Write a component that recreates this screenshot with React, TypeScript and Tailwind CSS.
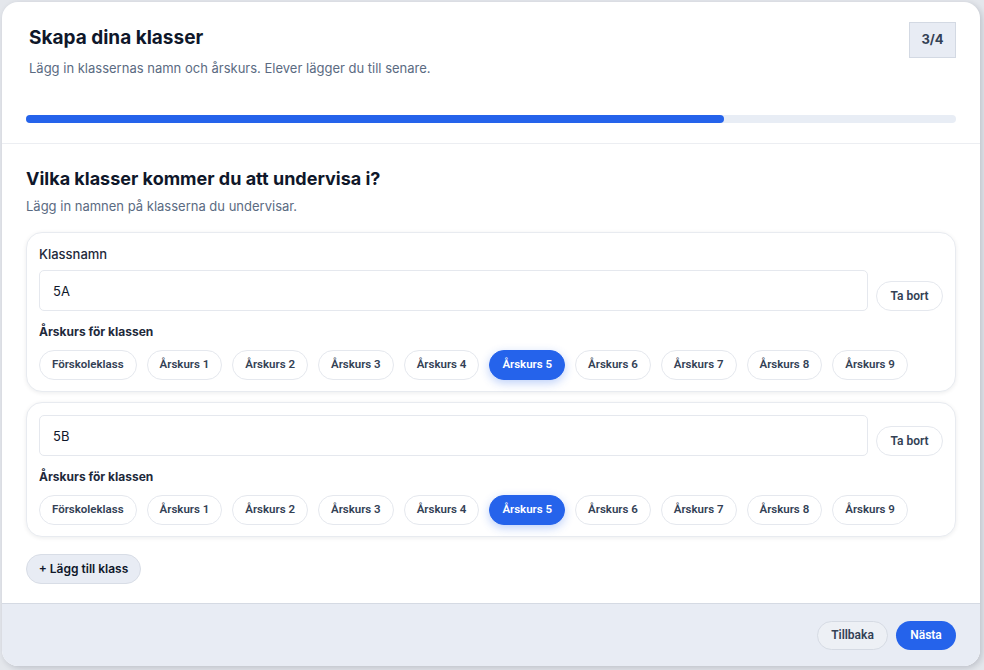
import { useState } from 'react';

const grades = [
  'Förskoleklass',
  'Årskurs 1',
  'Årskurs 2',
  'Årskurs 3',
  'Årskurs 4',
  'Årskurs 5',
  'Årskurs 6',
  'Årskurs 7',
  'Årskurs 8',
  'Årskurs 9',
];

type Klass = { name: string; grade: string };

function ClassCard({
  klass,
  showLabel,
  onChange,
}: {
  klass: Klass;
  showLabel: boolean;
  onChange: (k: Klass) => void;
}) {
  return (
    <div className="rounded-2xl border border-[#e8ebf0] bg-white px-3 pt-3 pb-[11px] shadow-[0_1px_4px_rgba(15,23,42,0.08)]">
      {showLabel && (
        <div className="text-[13px] leading-[18px] font-medium text-[#1e293b] mb-[7px]">Klassnamn</div>
      )}
      <div className="flex items-end gap-2">
        <input
          value={klass.name}
          onChange={(e) => onChange({ ...klass, name: e.target.value })}
          className="h-[41px] flex-1 rounded-[5px] border border-[#e5e8ee] px-[13px] text-[13px] text-[#0f172a] outline-none"
        />
        <button className="h-[30px] w-[67px] rounded-full border border-[#e5e8ee] bg-white text-[12px] font-semibold text-[#334155] [font-family:Roboto,sans-serif]">
          Ta bort
        </button>
      </div>
      <div className="mt-[13px] text-[12px] leading-[16px] font-bold text-[#1e293b]">Årskurs för klassen</div>
      <div className="mt-[10px] flex gap-2.5">
        {grades.map((g) => {
          const active = g === klass.grade;
          return (
            <button
              key={g}
              onClick={() => onChange({ ...klass, grade: g })}
              className={
                active
                  ? 'h-[30px] rounded-full border border-[#2563eb] bg-[#2563eb] px-3 text-[11.5px] font-semibold text-white shadow-[0_3px_10px_rgba(37,99,235,0.3)] [font-family:Roboto,sans-serif]'
                  : 'h-[30px] rounded-full border border-[#e5e8ee] bg-white px-3 text-[11.5px] font-semibold text-[#334155] [font-family:Roboto,sans-serif]'
              }
            >
              {g}
            </button>
          );
        })}
      </div>
    </div>
  );
}

export default function App() {
  const [classes, setClasses] = useState<Klass[]>([
    { name: '5A', grade: 'Årskurs 5' },
    { name: '5B', grade: 'Årskurs 5' },
  ]);

  const update = (i: number, k: Klass) => {
    setClasses((prev) => prev.map((c, idx) => (idx === i ? k : c)));
  };

  return (
    <div className="h-[670px] w-[984px] bg-[#e4e7ec] pt-[2px] pl-[2px] [font-family:Inter,sans-serif]">
      <div className="flex h-[664px] w-[978px] flex-col overflow-hidden rounded-2xl bg-white shadow-[2px_2px_6px_rgba(15,23,42,0.18)]">
        {/* header */}
        <div className="border-b border-[#eceef2] px-6 pt-5 pb-5">
          <div className="flex items-start justify-between">
            <div className="pl-[3px]">
              <h1 className="pt-[2px] text-[19px] leading-[28px] font-bold text-[#0f172a]">Skapa dina klasser</h1>
              <p className="mt-[6px] text-[13px] leading-[20px] text-[#5b6b82]">
                Lägg in klassernas namn och årskurs. Elever lägger du till senare.
              </p>
            </div>
            <div className="flex h-[36px] w-[47px] items-center justify-center border border-[#d3d9e3] bg-[#e8ecf4] text-[13px] font-bold text-[#334155]">
              3/4
            </div>
          </div>
          <div className="mt-[37px] h-[8px] w-full rounded-full bg-[#e8edf5]">
            <div className="h-full w-[75%] rounded-full bg-[#2563eb]" />
          </div>
        </div>

        {/* content */}
        <div className="flex-1 px-6 pt-[22px]">
          <h2 className="text-[18px] leading-[26px] font-bold text-[#0f172a]">Vilka klasser kommer du att undervisa i?</h2>
          <p className="mt-[4px] text-[13px] leading-[20px] text-[#5b6b82]">Lägg in namnen på klasserna du undervisar.</p>
          <div className="mt-4 flex flex-col gap-2.5">
            {classes.map((c, i) => (
              <ClassCard key={i} klass={c} showLabel={i === 0} onChange={(k) => update(i, k)} />
            ))}
          </div>
          <button
            onClick={() => setClasses((p) => [...p, { name: '', grade: '' }])}
            className="mt-[17px] h-[30px] w-[115px] rounded-full border border-[#d8dde6] bg-[#e8ecf4] text-[12px] font-semibold text-[#0f172a]"
          >
            + Lägg till klass
          </button>
        </div>

        {/* footer */}
        <div className="flex h-[63px] items-center justify-end gap-2 border-t border-[#d5dae3] bg-[#e8ecf4] px-6">
          <button className="h-[29px] w-[71px] rounded-full border border-[#d5dae3] bg-[#edf0f5] text-[12px] font-semibold text-[#334155] [font-family:Roboto,sans-serif]">
            Tillbaka
          </button>
          <button className="h-[29px] w-[60px] rounded-full bg-[#2563eb] text-[12px] font-semibold text-white [font-family:Roboto,sans-serif]">
            Nästa
          </button>
        </div>
      </div>
    </div>
  );
}
